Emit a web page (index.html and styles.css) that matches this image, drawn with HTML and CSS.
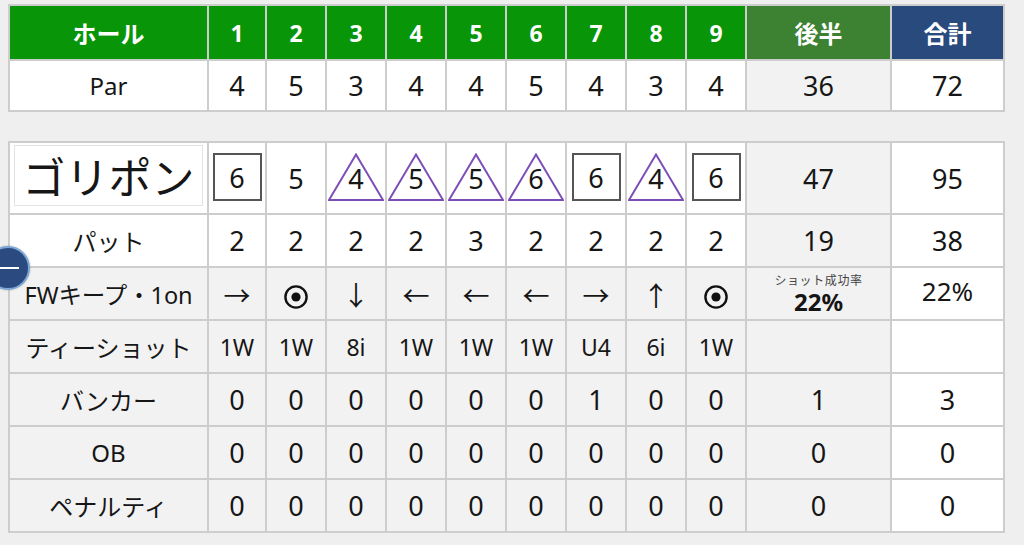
FILE: index.html
```html
<!DOCTYPE html>
<html lang="ja">
<head>
<meta charset="utf-8">
<title>スコアカード</title>
<link rel="stylesheet" href="styles.css">
</head>
<body>
<div class="page">
  <div class="grid g1">
    <div class="c hg hlabel">ホール</div>
    <div class="c hg">1</div><div class="c hg">2</div><div class="c hg">3</div>
    <div class="c hg">4</div><div class="c hg">5</div><div class="c hg">6</div>
    <div class="c hg">7</div><div class="c hg">8</div><div class="c hg">9</div>
    <div class="c hb hlabel">後半</div>
    <div class="c hn hlabel">合計</div>

    <div class="c w label">Par</div>
    <div class="c w num">4</div><div class="c w num">5</div><div class="c w num">3</div>
    <div class="c w num">4</div><div class="c w num">4</div><div class="c w num">5</div>
    <div class="c w num">4</div><div class="c w num">3</div><div class="c w num">4</div>
    <div class="c g num">36</div>
    <div class="c w num">72</div>
  </div>

  <div class="grid g2">
    <div class="c w namecell"><div class="namebox">ゴリポン</div></div>
    <div class="c w num"><span class="sq">6</span></div>
    <div class="c w num">5</div>
    <div class="c w num"><span class="tri"><svg viewBox="0 0 56 48" width="56" height="48"><polygon points="1,47 28,1.5 55,47" fill="none" stroke="#7d4fb6" stroke-width="2"/></svg><span class="tv">4</span></span></div>
    <div class="c w num"><span class="tri"><svg viewBox="0 0 56 48" width="56" height="48"><polygon points="1,47 28,1.5 55,47" fill="none" stroke="#7d4fb6" stroke-width="2"/></svg><span class="tv">5</span></span></div>
    <div class="c w num"><span class="tri"><svg viewBox="0 0 56 48" width="56" height="48"><polygon points="1,47 28,1.5 55,47" fill="none" stroke="#7d4fb6" stroke-width="2"/></svg><span class="tv">5</span></span></div>
    <div class="c w num"><span class="tri"><svg viewBox="0 0 56 48" width="56" height="48"><polygon points="1,47 28,1.5 55,47" fill="none" stroke="#7d4fb6" stroke-width="2"/></svg><span class="tv">6</span></span></div>
    <div class="c w num"><span class="sq">6</span></div>
    <div class="c w num"><span class="tri"><svg viewBox="0 0 56 48" width="56" height="48"><polygon points="1,47 28,1.5 55,47" fill="none" stroke="#7d4fb6" stroke-width="2"/></svg><span class="tv">4</span></span></div>
    <div class="c w num"><span class="sq">6</span></div>
    <div class="c g num">47</div>
    <div class="c w num">95</div>

    <div class="c w label">パット</div>
    <div class="c w num">2</div><div class="c w num">2</div><div class="c w num">2</div>
    <div class="c w num">2</div><div class="c w num">3</div><div class="c w num">2</div>
    <div class="c w num">2</div><div class="c w num">2</div><div class="c w num">2</div>
    <div class="c g num">19</div>
    <div class="c w num">38</div>

    <div class="c g label fw">FWキープ・1on</div>
    <div class="c g arrow">→</div>
    <div class="c g"><svg class="bull" viewBox="0 0 24 24" width="24" height="24"><circle cx="12" cy="12" r="10.6" fill="none" stroke="#111" stroke-width="2.4"/><circle cx="12" cy="12" r="4.6" fill="#111"/></svg></div>
    <div class="c g arrow">↓</div>
    <div class="c g arrow">←</div>
    <div class="c g arrow">←</div>
    <div class="c g arrow">←</div>
    <div class="c g arrow">→</div>
    <div class="c g arrow">↑</div>
    <div class="c g"><svg class="bull" viewBox="0 0 24 24" width="24" height="24"><circle cx="12" cy="12" r="10.6" fill="none" stroke="#111" stroke-width="2.4"/><circle cx="12" cy="12" r="4.6" fill="#111"/></svg></div>
    <div class="c g rate"><span class="rate-t">ショット成功率</span><span class="rate-v">22%</span></div>
    <div class="c w num pct">22%</div>

    <div class="c g label">ティーショット</div>
    <div class="c g num club">1W</div><div class="c g num club">1W</div><div class="c g num club">8i</div>
    <div class="c g num club">1W</div><div class="c g num club">1W</div><div class="c g num club">1W</div>
    <div class="c g num club">U4</div><div class="c g num club">6i</div><div class="c g num club">1W</div>
    <div class="c g"></div>
    <div class="c w"></div>

    <div class="c g label">バンカー</div>
    <div class="c g num">0</div><div class="c g num">0</div><div class="c g num">0</div>
    <div class="c g num">0</div><div class="c g num">0</div><div class="c g num">0</div>
    <div class="c g num">1</div><div class="c g num">0</div><div class="c g num">0</div>
    <div class="c g num">1</div>
    <div class="c w num">3</div>

    <div class="c g label">OB</div>
    <div class="c g num">0</div><div class="c g num">0</div><div class="c g num">0</div>
    <div class="c g num">0</div><div class="c g num">0</div><div class="c g num">0</div>
    <div class="c g num">0</div><div class="c g num">0</div><div class="c g num">0</div>
    <div class="c g num">0</div>
    <div class="c w num">0</div>

    <div class="c g label">ペナルティ</div>
    <div class="c g num">0</div><div class="c g num">0</div><div class="c g num">0</div>
    <div class="c g num">0</div><div class="c g num">0</div><div class="c g num">0</div>
    <div class="c g num">0</div><div class="c g num">0</div><div class="c g num">0</div>
    <div class="c g num">0</div>
    <div class="c w num">0</div>
  </div>

  <button class="collapse" aria-label="折りたたむ"><span class="bar"></span></button>
</div>
</body>
</html>
```

FILE: styles.css
```css
html, body {
  margin: 0;
  padding: 0;
  background: #efefef;
}
body {
  font-family: "Noto Sans", "Noto Sans CJK JP", sans-serif;
  color: #161616;
  overflow: hidden;
}
.page {
  position: relative;
  padding: 4px 8px 0;
  height: 541px;
}
.grid {
  display: grid;
  grid-template-columns: 197px 56px repeat(8, 58px) 143px 111px;
  gap: 2px;
  padding: 2px;
  background: #cdcdcd;
  width: max-content;
}
.g1 {
  grid-template-rows: 53px 49px;
}
.g2 {
  margin-top: 29px;
  grid-template-rows: 70px repeat(6, 51px);
}
.c {
  display: flex;
  align-items: center;
  justify-content: center;
  overflow: visible;
  white-space: nowrap;
}
.w { background: #ffffff; }
.g { background: #f2f2f2; }

.hg, .hb, .hn {
  color: #ffffff;
  font-weight: 700;
  font-size: 23px;
  font-family: "Noto Sans", "Noto Sans CJK JP", sans-serif;
}
.hg { background: #089508; }
.hb { background: #3d8132; }
.hn { background: #284a7c; }
.hlabel {
  font-family: "Noto Sans CJK JP", sans-serif;
  font-size: 24px;
}

.label {
  font-size: 24px;
  font-family: "Noto Sans", "Noto Sans CJK JP", sans-serif;
}
.fw { font-size: 23.5px; letter-spacing: -0.1px; }

.num {
  font-size: 27px;
}
.club { font-size: 23px; }

.namecell {
  align-items: stretch;
  justify-content: stretch;
}
.namebox {
  flex: 1;
  margin: 2px 4px 7px;
  border: 1px solid #e3e3e3;
  background: #ffffff;
  display: flex;
  align-items: center;
  justify-content: center;
  font-family: "Noto Sans CJK JP", sans-serif;
  font-size: 43px;
  padding-bottom: 2px;
}

.sq {
  box-sizing: border-box;
  width: 49px;
  height: 48px;
  border: 2px solid #555555;
  display: flex;
  align-items: center;
  justify-content: center;
  margin-top: -2px;
}
.tri {
  display: grid;
  width: 56px;
  height: 48px;
  margin-top: -2px;
}
.tri svg, .tri .tv {
  grid-area: 1 / 1;
}
.tri .tv {
  display: flex;
  align-items: center;
  justify-content: center;
  padding-top: 2px;
}

.arrow {
  font-family: "Noto Sans CJK JP", sans-serif;
  font-size: 27px;
  padding-top: 2px;
}
.bull {
  margin-top: 6px;
}

.rate {
  flex-direction: column;
  justify-content: flex-start;
  padding-top: 3px;
}
.rate-t {
  font-family: "Noto Sans CJK JP", sans-serif;
  font-size: 12px;
  color: #444444;
  line-height: 17px;
  letter-spacing: 0.6px;
}
.rate-v {
  font-weight: 700;
  font-size: 24px;
  line-height: 28px;
}
.pct {
  font-size: 26px;
  padding-bottom: 6px;
}

.collapse {
  position: absolute;
  left: -14px;
  top: 246px;
  width: 44px;
  height: 44px;
  border-radius: 50%;
  border: 2px solid #7aa6d8;
  background: #2b4a80;
  padding: 0;
  display: flex;
  align-items: center;
  justify-content: center;
  box-shadow: 0 0 2px rgba(0,0,0,0.3);
}
.collapse .bar {
  display: block;
  width: 22px;
  height: 2px;
  background: #ffffff;
}
```
